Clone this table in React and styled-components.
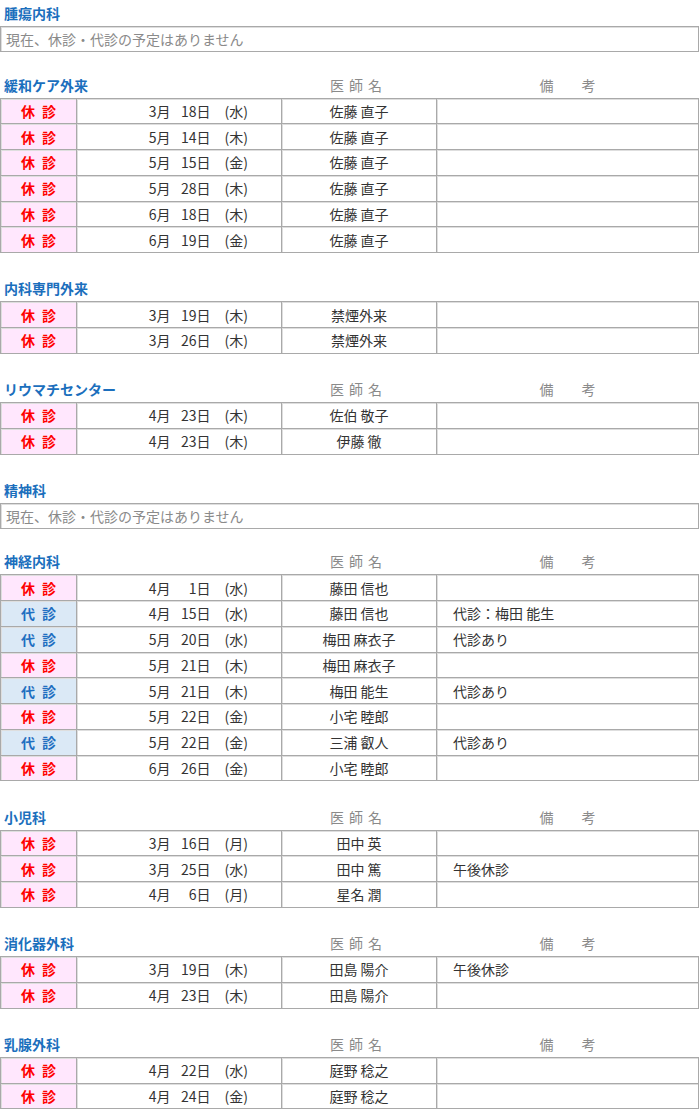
import React from "react";
import styled, { createGlobalStyle } from "styled-components";

const Global = createGlobalStyle`
  html, body { margin: 0; padding: 0; background: #fff; }
  body {
    font-family: "Noto Sans CJK JP", "Noto Sans", sans-serif;
    font-size: 14px;
    color: #333;
  }
`;

const Page = styled.div`
  width: 699px;
  display: flex;
  flex-direction: column;
`;

const Section = styled.section`
  display: flex;
  flex-direction: column;
  padding-bottom: ${(p) => (p.$empty ? "19.5px" : "22.25px")};
`;

const Head = styled.div`
  display: grid;
  grid-template-columns: 281px 155px 1fr;
  height: 26px;
  align-items: center;
`;

const Title = styled.h2`
  margin: 0;
  padding-left: 4px;
  font-size: 14px;
  font-weight: 700;
  color: #1b6fbd;
  line-height: 1;
`;

const Label = styled.span`
  text-align: center;
  color: #8a8a8a;
  font-size: 14px;
  letter-spacing: ${(p) => p.$spacing || "0"};
  line-height: 1;
`;

const EmptyBox = styled.div`
  height: 26px;
  box-sizing: border-box;
  border: 1px solid #a9a9a9;
  box-shadow: inset 1px 1px 0 #dedede;
  padding-left: 5px;
  display: flex;
  align-items: center;
  color: #8a8a8a;
  font-size: 14px;
`;

const Table = styled.table`
  width: 100%;
  border-collapse: collapse;
  table-layout: fixed;
`;

const Col = styled.col`
  width: ${(p) => p.$w};
`;

const Cell = styled.td`
  height: 24.75px;
  padding: 0;
  border: 1px solid #a9a9a9;
  box-shadow: inset 1px 1px 0 #dedede;
  font-size: 14px;
  line-height: 1;
  vertical-align: middle;
  text-align: ${(p) => p.$align || "left"};
`;

const StatusCell = styled(Cell)`
  text-align: center;
  font-weight: 700;
  letter-spacing: 2px;
  padding-left: 2px;
  color: ${(p) => (p.$kind === "代" ? "#1f6fc1" : "#ff0000")};
  background: ${(p) => (p.$kind === "代" ? "#dbe9f6" : "#ffe7fd")};
`;

const DateWrap = styled.div`
  display: flex;
  justify-content: flex-end;
  align-items: center;
  padding-right: 33px;
`;

const Month = styled.span``;

const Day = styled.span`
  width: 40px;
  text-align: right;
`;

const Weekday = styled.span`
  margin-left: 14px;
`;

const NoteCell = styled(Cell)`
  padding-left: 16px;
`;

const sections = [
  { title: "腫瘍内科", empty: true },
  {
    title: "緩和ケア外来",
    labels: true,
    rows: [
      ["休", 3, 18, "水", "佐藤 直子", ""],
      ["休", 5, 14, "木", "佐藤 直子", ""],
      ["休", 5, 15, "金", "佐藤 直子", ""],
      ["休", 5, 28, "木", "佐藤 直子", ""],
      ["休", 6, 18, "木", "佐藤 直子", ""],
      ["休", 6, 19, "金", "佐藤 直子", ""],
    ],
  },
  {
    title: "内科専門外来",
    rows: [
      ["休", 3, 19, "木", "禁煙外来", ""],
      ["休", 3, 26, "木", "禁煙外来", ""],
    ],
  },
  {
    title: "リウマチセンター",
    labels: true,
    rows: [
      ["休", 4, 23, "木", "佐伯 敬子", ""],
      ["休", 4, 23, "木", "伊藤 徹", ""],
    ],
  },
  { title: "精神科", empty: true },
  {
    title: "神経内科",
    labels: true,
    rows: [
      ["休", 4, 1, "水", "藤田 信也", ""],
      ["代", 4, 15, "水", "藤田 信也", "代診：梅田 能生"],
      ["代", 5, 20, "水", "梅田 麻衣子", "代診あり"],
      ["休", 5, 21, "木", "梅田 麻衣子", ""],
      ["代", 5, 21, "木", "梅田 能生", "代診あり"],
      ["休", 5, 22, "金", "小宅 睦郎", ""],
      ["代", 5, 22, "金", "三浦 叡人", "代診あり"],
      ["休", 6, 26, "金", "小宅 睦郎", ""],
    ],
  },
  {
    title: "小児科",
    labels: true,
    rows: [
      ["休", 3, 16, "月", "田中 英", ""],
      ["休", 3, 25, "水", "田中 篤", "午後休診"],
      ["休", 4, 6, "月", "星名 潤", ""],
    ],
  },
  {
    title: "消化器外科",
    labels: true,
    rows: [
      ["休", 3, 19, "木", "田島 陽介", "午後休診"],
      ["休", 4, 23, "木", "田島 陽介", ""],
    ],
  },
  {
    title: "乳腺外科",
    labels: true,
    rows: [
      ["休", 4, 22, "水", "庭野 稔之", ""],
      ["休", 4, 24, "金", "庭野 稔之", ""],
    ],
  },
];

export default function App() {
  return (
    <>
      <Global />
      <Page>
        {sections.map((s) => (
          <Section key={s.title} $empty={s.empty}>
            <Head>
              <Title>{s.title}</Title>
              {s.labels && (
                <>
                  <Label $spacing="5px">医師名</Label>
                  <Label>備　　考</Label>
                </>
              )}
            </Head>
            {s.empty ? (
              <EmptyBox>現在、休診・代診の予定はありません</EmptyBox>
            ) : (
              <Table>
                <colgroup>
                  <Col $w="76px" />
                  <Col $w="205px" />
                  <Col $w="155px" />
                  <Col $w="auto" />
                </colgroup>
                <tbody>
                  {s.rows.map((r, i) => (
                    <tr key={i}>
                      <StatusCell $kind={r[0]}>{r[0]} 診</StatusCell>
                      <Cell>
                        <DateWrap>
                          <Month>{r[1]}月</Month>
                          <Day>{r[2]}日</Day>
                          <Weekday>({r[3]})</Weekday>
                        </DateWrap>
                      </Cell>
                      <Cell $align="center">{r[4]}</Cell>
                      <NoteCell>{r[5]}</NoteCell>
                    </tr>
                  ))}
                </tbody>
              </Table>
            )}
          </Section>
        ))}
      </Page>
    </>
  );
}
